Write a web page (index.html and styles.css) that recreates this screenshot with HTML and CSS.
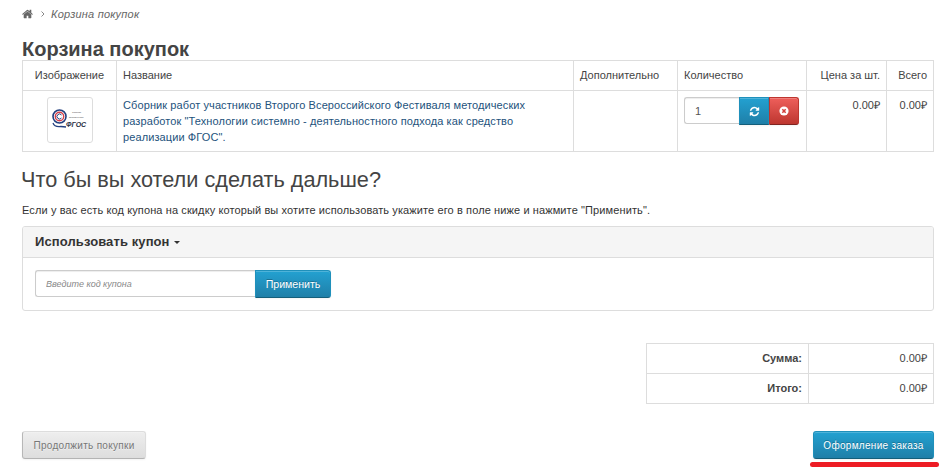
FILE: index.html
```html
<!DOCTYPE html>
<html lang="ru">
<head>
<meta charset="utf-8">
<title>Корзина покупок</title>
<link rel="stylesheet" href="styles.css">
</head>
<body>
<nav class="crumbs">
  <svg class="home" viewBox="0 0 1664 1792"><path d="M1408 992v480q0 26-19 45t-45 19h-384v-384h-256v384h-384q-26 0-45-19t-19-45v-480q0-1 .5-3t.5-3l575-474 575 474q1 2 1 6zm223-69l-62 74q-8 9-21 11h-3q-13 0-21-7l-692-577-692 577q-12 8-24 7-13-2-21-11l-62-74q-8-10-7-23.5t11-21.5l719-599q32-26 76-26t76 26l244 204v-195q0-14 9-23t23-9h192q14 0 23 9t9 23v408l219 182q10 8 11 21.5t-7 23.5z"/></svg>
  <svg class="chev" viewBox="0 0 6 8"><path d="M1.500 1.500 4 4 1.500 6.500" fill="none" stroke="#888" stroke-width="1"/></svg>
  <em>Корзина покупок</em>
</nav>
<h1>Корзина покупок</h1>
<table class="grid cart">
  <colgroup><col class="c1"><col class="c2"><col class="c3"><col class="c4"><col class="c5"><col class="c6"></colgroup>
  <thead>
    <tr><th class="center">Изображение</th><th>Название</th><th>Дополнительно</th><th>Количество</th><th class="right">Цена за шт.</th><th class="right">Всего</th></tr>
  </thead>
  <tbody>
    <tr>
      <td class="center">
        <span class="thumb">
          <svg viewBox="0 0 44 44" width="44" height="44">
            <circle cx="11.500" cy="18.500" r="6.500" fill="none" stroke="#23407f" stroke-width="1.600"/>
            <circle cx="11.500" cy="18.500" r="4.200" fill="none" stroke="#d6404a" stroke-width="1.400"/>
            <path d="M13.500 17a2.500 2.500 0 1 0 0 3" fill="none" stroke="#23407f" stroke-width="1"/>
            <path d="M5 25c1 3 4 4 8 3.500l5 .5" fill="none" stroke="#23407f" stroke-width="1.300"/>
            <text x="18" y="29" class="logo-text">ФГОС</text>
            <text x="24" y="15" class="logo-small">Сборник</text>
            <text x="21" y="20" class="logo-small">методических</text>
          </svg>
        </span>
      </td>
      <td><a class="name" href="#">Сборник работ участников Второго Всероссийского Фестиваля методических разработок "Технологии системно - деятельностного подхода как средство реализации ФГОС".</a></td>
      <td></td>
      <td>
        <div class="qty">
          <input class="qty-input" type="text" value="1">
          <button class="btn primary icon" type="button"><svg viewBox="0 0 1792 1792" width="11" height="11"><path fill="#fff" d="M1639 1056q0 5-1 7-64 268-268 434.500t-478 166.500q-146 0-282.500-55t-243.500-157l-129 129q-19 19-45 19t-45-19-19-45v-448q0-26 19-45t45-19h448q26 0 45 19t19 45-19 45l-137 137q71 66 161 102t187 36q134 0 250-65t186-179q11-17 53-117 8-23 30-23h192q13 0 22.500 9.500t9.500 22.500zm25-800v448q0 26-19 45t-45 19h-448q-26 0-45-19t-19-45 19-45l138-138q-148-137-349-137-134 0-250 65t-186 179q-11 17-53 117-8 23-30 23h-199q-13 0-22.500-9.500t-9.500-22.500v-7q65-268 270-434.500t480-166.500q146 0 284 55.500t245 156.500l130-129q19-19 45-19t45 19 19 45z"/></svg></button>
          <button class="btn danger icon" type="button"><svg viewBox="0 0 12 12" width="10" height="10"><circle cx="6" cy="6" r="5.500" fill="#fff"/><path d="M4 4l4 4M8 4l-4 4" stroke="#d2403c" stroke-width="1.800"/></svg></button>
        </div>
      </td>
      <td class="right">0.00₽</td>
      <td class="right">0.00₽</td>
    </tr>
  </tbody>
</table>
<h2>Что бы вы хотели сделать дальше?</h2>
<p class="lead">Если у вас есть код купона на скидку который вы хотите использовать укажите его в поле ниже и нажмите "Применить".</p>
<section class="panel">
  <header class="panel-head">Использовать купон <span class="caret"></span></header>
  <div class="panel-body">
    <input class="coupon" type="text" placeholder="Введите код купона">
    <button class="btn primary apply" type="button">Применить</button>
  </div>
</section>
<div class="totals-row">
  <table class="grid totals">
    <tr><td class="label">Сумма:</td><td class="right">0.00₽</td></tr>
    <tr><td class="label">Итого:</td><td class="right">0.00₽</td></tr>
  </table>
</div>
<div class="actions">
  <button class="btn default wide" type="button">Продолжить покупки</button>
  <div class="checkout">
    <button class="btn primary wide" type="button">Оформление заказа</button>
    <span class="mark"></span>
  </div>
</div>
</body>
</html>
```
FILE: styles.css
```css
* { box-sizing: border-box; }
html, body { margin: 0; padding: 0; }
body {
  padding: 0 10px 0 22px;
  background: #fff;
  font: 11px/17px "Liberation Sans", Arial, sans-serif;
  color: #444;
  height: 475px;
  overflow: hidden;
}
.crumbs {
  display: flex;
  align-items: center;
  height: 14px;
  margin-top: 7px;
  color: #666;
}
.home { width: 11px; height: 12px; fill: #666; }
.chev { width: 6px; height: 8px; margin: 0 5px 0 7px; }
.crumbs em { font-size: 11px; letter-spacing: .2px; }
h1 {
  margin: 18px 0 0;
  font-size: 20px;
  line-height: 21px;
  font-weight: 700;
  color: #444;
}
.grid { border-collapse: collapse; }
.grid td, .grid th {
  border: 1px solid #ddd;
  padding: 6px;
  font-weight: 400;
  text-align: left;
  vertical-align: top;
}
.cart { width: 911px; table-layout: fixed; }
.cart thead th { height: 30px; }
.cart tbody td { height: 61px; padding-bottom: 5px; line-height: 16px; }
.c1 { width: 94px; } .c2 { width: 457px; } .c3 { width: 104px; } .c4 { width: 129px; } .c5 { width: 80px; } .c6 { width: 47px; }
.grid .center { text-align: center; }
.grid .right { text-align: right; }
.thumb {
  display: block;
  width: 46px;
  height: 46px;
  margin: 0 auto;
  border: 1px solid #ddd;
  border-radius: 3px;
  background: #fff;
}
.thumb svg { display: block; }
.logo-text { font: italic 700 7px "Liberation Sans", sans-serif; fill: #2a2f45; }
.logo-small { font: 2.300px "Liberation Sans", sans-serif; fill: #444; }
.name { color: #23527c; text-decoration: none; letter-spacing: .1px; }
.qty { display: flex; align-items: flex-start; }
.qty-input {
  width: 55px;
  height: 27px;
  padding: 0 10px;
  border: 1px solid #ccc;
  border-right: 0;
  border-radius: 3px 0 0 3px;
  font: 11px "Liberation Sans", sans-serif;
  color: #555;
  box-shadow: inset 0 1px 1px rgba(0,0,0,.075);
}
.btn {
  display: inline-flex;
  align-items: center;
  justify-content: center;
  border: 1px solid;
  border-radius: 3px;
  padding: 0;
  white-space: nowrap;
  font: 11px "Liberation Sans", sans-serif;
  box-shadow: inset 0 1px 0 rgba(255,255,255,.2), 0 1px 2px rgba(0,0,0,.05);
}
.primary {
  color: #fff;
  text-shadow: 0 -1px 0 rgba(0,0,0,.25);
  background: linear-gradient(#23a1d1, #1f7fa8);
  border-color: #1f90bb #1f90bb #145e7a;
}
.danger {
  color: #fff;
  background: linear-gradient(#ee5f5b, #bd362f);
  border-color: #bd362f #bd362f #802420;
}
.default {
  color: #777;
  text-shadow: 0 1px 0 rgba(255,255,255,.5);
  background: linear-gradient(#eee, #ddd);
  border-color: #ddd #ddd #b3b3b3 #b7b7b7;
}
.icon { height: 28px; }
.qty .primary { width: 30px; border-radius: 0; }
.qty .danger { width: 30px; border-radius: 0 3px 3px 0; }
h2 {
  margin: 15px 0 0 -1px;
  font-size: 21.700px;
  line-height: 26px;
  font-weight: 400;
  color: #444;
}
.lead { margin: 10px 0 0; font-size: 11px; line-height: 14px; letter-spacing: .11px; color: #333; }
.panel {
  margin-top: 9px;
  border: 1px solid #ddd;
  border-radius: 3px;
  height: 85px;
  overflow: hidden;
}
.panel-head {
  height: 31px;
  padding: 0 12px;
  background: #f5f5f5;
  border-bottom: 1px solid #ddd;
  font-size: 13px;
  line-height: 30px;
  font-weight: 700;
  letter-spacing: .1px;
  color: #333;
}
.caret {
  display: inline-block;
  vertical-align: middle;
  margin-left: 1px;
  border-top: 3px solid #333;
  border-left: 3px solid transparent;
  border-right: 3px solid transparent;
}
.panel-body { display: flex; padding: 12px; }
.coupon {
  width: 220px;
  height: 27px;
  padding: 0 10px;
  border: 1px solid #ccc;
  border-right: 0;
  border-radius: 3px 0 0 3px;
  font: italic 9px "Liberation Sans", sans-serif;
  box-shadow: inset 0 1px 1px rgba(0,0,0,.075);
}
.coupon::placeholder { color: #888; opacity: 1; }
.apply { width: 76px; height: 28px; font-size: 10.600px; border-radius: 0 3px 3px 0; }
.totals-row { display: flex; justify-content: flex-end; margin-top: 32px; }
.totals { width: 288px; table-layout: fixed; }
.totals td { height: 30px; }
.totals td:first-child { width: 162px; }
.grid .label { text-align: right; font-weight: 700; }
.actions { display: flex; justify-content: space-between; margin-top: 27px; }
.wide { height: 28px; font-size: 10px; letter-spacing: .3px; }
.default.wide { width: 124px; }
.checkout { position: relative; }
.checkout .wide { width: 121px; }
.mark {
  position: absolute;
  left: -3px;
  top: 31px;
  width: 129px;
  height: 5px;
  background: #ed1c24;
  border-radius: 3px;
}
```
